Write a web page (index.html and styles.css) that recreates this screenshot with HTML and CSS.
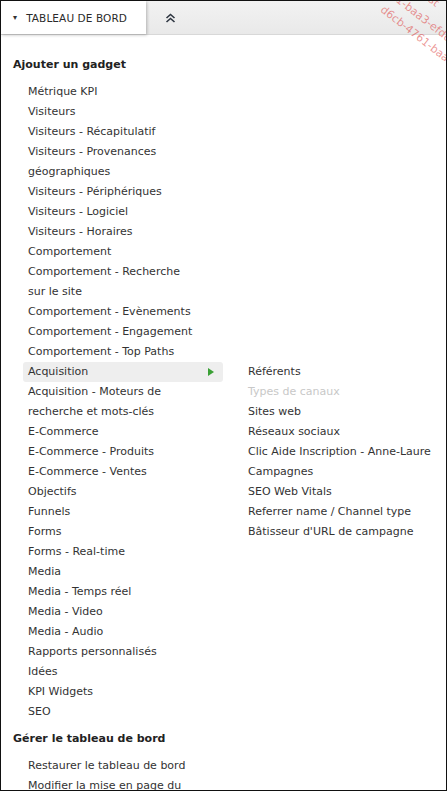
FILE: index.html
```html
<!DOCTYPE html>
<html lang="fr">
<head>
<meta charset="utf-8">
<title>Tableau de bord</title>
<link rel="stylesheet" href="styles.css">
</head>
<body>
<div class="frame">
  <div class="topbar">
    <div class="tab"><span class="caret">&#9662;</span>TABLEAU DE BORD</div>
    <div class="collapse">
      <svg width="11" height="10" viewBox="0 0 11 10"><path d="M1.5 5 L5.5 1.5 L9.5 5 M1.5 9 L5.5 5.5 L9.5 9" fill="none" stroke="#2d3540" stroke-width="1.6"/></svg>
    </div>
  </div>
  <div class="watermark">
    <div class="wm-line l1">st</div>
    <div class="wm-line l2">61-baa3-efdd3</div>
    <div class="wm-line l3">d6cb-4761-baa3-efd</div>
  </div>
  <div class="content">
    <h2 class="section">Ajouter un gadget</h2>
    <ul class="menu">
      <li class="item"><span class="label">Métrique KPI</span></li>
      <li class="item"><span class="label">Visiteurs</span></li>
      <li class="item"><span class="label">Visiteurs - Récapitulatif</span></li>
      <li class="item"><span class="label">Visiteurs - Provenances géographiques</span></li>
      <li class="item"><span class="label">Visiteurs - Périphériques</span></li>
      <li class="item"><span class="label">Visiteurs - Logiciel</span></li>
      <li class="item"><span class="label">Visiteurs - Horaires</span></li>
      <li class="item"><span class="label">Comportement</span></li>
      <li class="item"><span class="label">Comportement - Recherche sur le site</span></li>
      <li class="item"><span class="label">Comportement - Evènements</span></li>
      <li class="item"><span class="label">Comportement - Engagement</span></li>
      <li class="item"><span class="label">Comportement - Top Paths</span></li>
      <li class="item active"><span class="label">Acquisition</span><span class="arrow"></span>
        <ul class="submenu">
          <li class="sub">Référents</li>
          <li class="sub disabled">Types de canaux</li>
          <li class="sub">Sites web</li>
          <li class="sub">Réseaux sociaux</li>
          <li class="sub">Clic Aide Inscription - Anne-Laure</li>
          <li class="sub">Campagnes</li>
          <li class="sub">SEO Web Vitals</li>
          <li class="sub">Referrer name / Channel type</li>
          <li class="sub">Bâtisseur d'URL de campagne</li>
        </ul>
      </li>
      <li class="item"><span class="label">Acquisition - Moteurs de recherche et mots-clés</span></li>
      <li class="item"><span class="label">E-Commerce</span></li>
      <li class="item"><span class="label">E-Commerce - Produits</span></li>
      <li class="item"><span class="label">E-Commerce - Ventes</span></li>
      <li class="item"><span class="label">Objectifs</span></li>
      <li class="item"><span class="label">Funnels</span></li>
      <li class="item"><span class="label">Forms</span></li>
      <li class="item"><span class="label">Forms - Real-time</span></li>
      <li class="item"><span class="label">Media</span></li>
      <li class="item"><span class="label">Media - Temps réel</span></li>
      <li class="item"><span class="label">Media - Video</span></li>
      <li class="item"><span class="label">Media - Audio</span></li>
      <li class="item"><span class="label">Rapports personnalisés</span></li>
      <li class="item"><span class="label">Idées</span></li>
      <li class="item"><span class="label">KPI Widgets</span></li>
      <li class="item"><span class="label">SEO</span></li>
    </ul>
    <h2 class="section">Gérer le tableau de bord</h2>
    <ul class="menu">
      <li class="item"><span class="label">Restaurer le tableau de bord</span></li>
      <li class="item"><span class="label">Modifier la mise en page du tableau de bord</span></li>
    </ul>
  </div>
</div>
</body>
</html>
```
FILE: styles.css
```css
* { box-sizing: border-box; }
html, body { margin: 0; padding: 0; }
body {
  font-family: "DejaVu Sans", Verdana, sans-serif;
  font-size: 11px;
  color: #333;
  background: #fff;
}
.frame {
  position: relative;
  width: 447px;
  height: 791px;
  border: 1px solid #111;
  overflow: hidden;
  background: #fff;
}
.topbar {
  display: flex;
  align-items: stretch;
  height: 34px;
  background: linear-gradient(#f2f2f2, #e9e9e9);
  border-bottom: 1px solid #d8d8d8;
}
.tab {
  display: flex;
  align-items: center;
  width: 145px;
  padding-left: 12px;
  background: #fff;
  box-shadow: 1px 1px 3px rgba(0,0,0,0.25);
  font-size: 10.5px;
  color: #2a2a2a;
  letter-spacing: 0.1px;
}
.caret { font-size: 8px; margin-right: 9px; color: #333; }
.collapse {
  display: flex;
  align-items: center;
  padding-left: 19px;
}
.watermark {
  position: absolute;
  top: 0;
  right: 0;
  width: 80px;
  height: 60px;
  overflow: hidden;
  pointer-events: none;
}
.wm-line {
  position: absolute;
  white-space: nowrap;
  color: rgba(220, 60, 60, 0.55);
  font-size: 11px;
  transform: rotate(38deg);
  transform-origin: left top;
}
.l1 { left: 68px; top: -8px; }
.l2 { left: 30px; top: -12px; }
.l3 { left: 20px; top: 2px; }
.content { padding: 20px 0 0 12px; }
.section {
  margin: 0;
  font-size: 11px;
  font-weight: bold;
  line-height: 20px;
  color: #222;
}
.menu {
  list-style: none;
  margin: 7px 0 7px 10px;
  padding: 0;
  width: 200px;
}
.item {
  position: relative;
  display: flex;
  align-items: flex-start;
  padding: 0 25px 0 5px;
  line-height: 20px;
  border-radius: 3px;
}
.item.active { background: #eee; }
.arrow {
  position: absolute;
  right: 9px;
  top: 6px;
  width: 0;
  height: 0;
  border-top: 4px solid transparent;
  border-bottom: 4px solid transparent;
  border-left: 6px solid #3aa035;
}
.submenu {
  position: absolute;
  left: 220px;
  top: 0;
  list-style: none;
  margin: 0;
  padding: 0;
  white-space: nowrap;
}
.sub {
  line-height: 20px;
  padding-left: 5px;
  color: #333;
}
.sub.disabled { color: #c8c8c8; }
```
